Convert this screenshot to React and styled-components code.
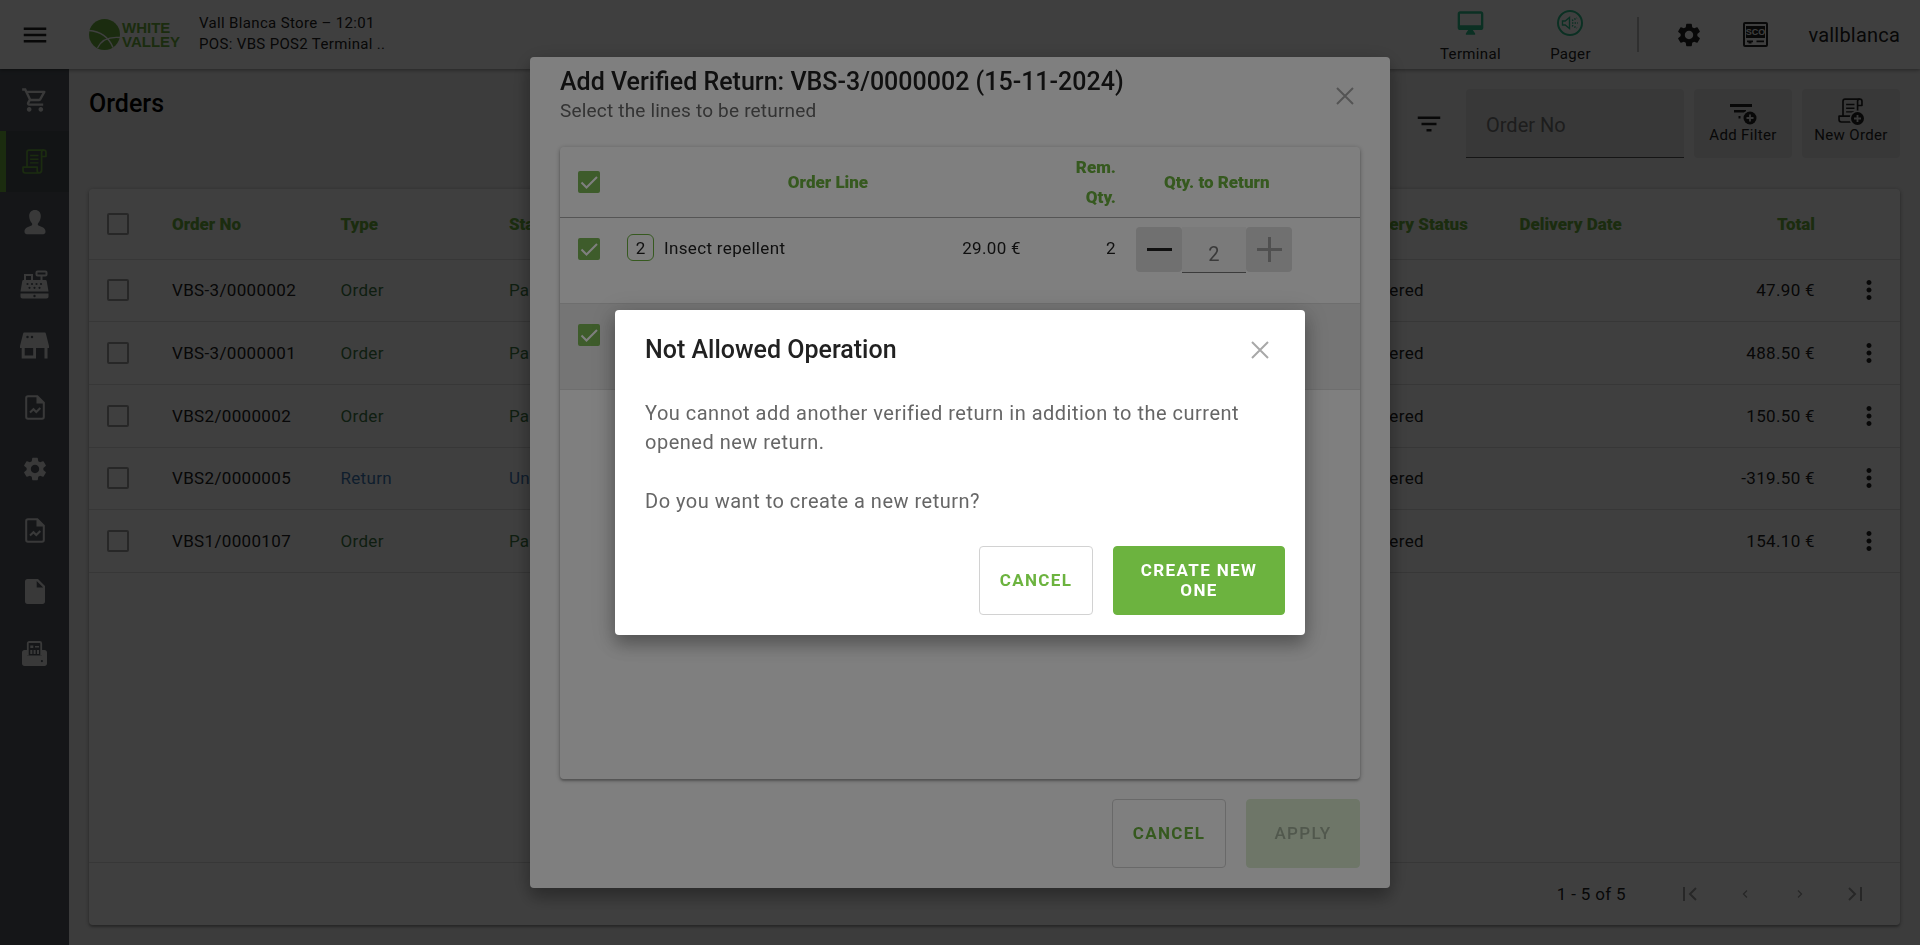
import { useState } from "react"
import styled, { createGlobalStyle, css } from "styled-components"
import { MdMenu, MdOutlineShoppingCart, MdSettings, MdMoreVert, MdFilterList, MdOutlineDesktopMac } from "react-icons/md"

const GREEN = "#6cb33f"
const TEAL = "#2cc08c"

const GlobalStyle = createGlobalStyle`
  * {
    box-sizing: border-box;
  }

  body {
    margin: 0;
    background-color: #f2f2f2;
    color: #212121;
    font-family: Roboto, "Liberation Sans", sans-serif;
    font-size: 17px;
    letter-spacing: 0.02em;
  }

  button,
  input {
    font: inherit;
    letter-spacing: inherit;
    color: inherit;
  }

  button {
    border: 0;
    padding: 0;
    background: none;
    cursor: pointer;
  }

  svg {
    display: block;
    flex: none;
  }
`

/* ---------- icons ---------- */

const ReceiptIcon = ({ size = 25 }) => (
  <svg width={size} height={size} viewBox="0 0 24 24" fill="none" stroke="currentColor" strokeWidth="1.6" strokeLinejoin="round">
    <path d="M4.8 17.3V3a2 2 0 0 1 2-2H21a2 2 0 0 1 2 2v4.2h-4.2" />
    <path d="M18.8 7.2V3.2c0-1.2.8-2.2 2-2.2M18.8 7v13.5c0 1.5-1 2.5-2.5 2.5H3.200C1.900 23 1 22 1 20.700V17.400h13.600v3.300c0 1.400.7 2.300 1.900 2.300" />
    <path d="M7.8 6.3h8M7.8 9.8h8M7.8 13.3h8" strokeWidth="1.4" />
  </svg>
)

const PersonIcon = () => (
  <svg width="22" height="25" viewBox="0 0 22 25" fill="currentColor">
    <path d="M11 0c3.600 0 5.800 2.600 5.800 6 0 2.700-1.100 5.600-2.700 7.200-.5.500-.5 1.900.3 2.300 3 1.300 7.100 2.200 7.100 6.200 0 2-1.500 2.600-3.500 2.600H4c-2 0-3.500-.6-3.500-2.600 0-4 4.100-4.900 7.100-6.200.8-.4.800-1.800.3-2.300C6.300 11.600 5.200 8.700 5.200 6 5.200 2.600 7.400 0 11 0z" />
  </svg>
)

const RegisterIcon = () => (
  <svg width="29" height="29" viewBox="0 0 29 29">
    <g fill="none" stroke="currentColor" strokeWidth="2">
      <rect x="16.5" y="1.5" width="10" height="4" rx="1" />
      <path d="M21.5 5.5v5M5 11V5h7v6" />
    </g>
    <path d="M3.5 10h22c.6 0 1 .4 1.200 1L28.500 21.500H.5L2.300 11c.2-.6.6-1 1.200-1z" fill="currentColor" />
    <path d="M.5 23.5h28v3c0 1-.8 2-2 2h-24c-1.200 0-2-1-2-2z" fill="currentColor" />
    <g fill="#545b63">
      <circle cx="7.5" cy="14" r="1.1" />
      <circle cx="12" cy="14" r="1.1" />
      <circle cx="16.5" cy="14" r="1.1" />
      <circle cx="21" cy="14" r="1.1" />
      <circle cx="9.5" cy="17.8" r="1.1" />
      <circle cx="14.5" cy="17.8" r="1.1" />
      <circle cx="19.5" cy="17.8" r="1.1" />
      <circle cx="14.5" cy="26" r="1.2" />
    </g>
  </svg>
)

const StoreIcon = () => (
  <svg width="29" height="27" viewBox="0 0 29 27" fill="currentColor">
    <path fillRule="evenodd" d="M4.500.5h20c.8 0 1.200.5 1.400 1.200L29 14v2h-1.500v10.500h-3V16H16v10.500H1.700V16H0v-2L3.100 1.700C3.300 1 3.700.5 4.500.5zM4.700 16v7.600h8.500V16zM7.500 3.700a1.200 1.200 0 1 0 0 2.500 1.200 1.200 0 0 0 0-2.500zm4.500 0a1.200 1.200 0 1 0 0 2.500 1.200 1.200 0 0 0 0-2.500z" />
  </svg>
)

const FileChartIcon = () => (
  <svg width="20" height="25" viewBox="0 0 20 25">
    <path d="M3 1.200h9.300l6.500 6.500V22c0 1-.8 1.800-1.800 1.800H3c-1 0-1.800-.8-1.800-1.800V3c0-1 .8-1.800 1.800-1.800z" fill="none" stroke="currentColor" strokeWidth="2" />
    <path d="M11.5 1l7.5 7.5h-7.5z" fill="currentColor" />
    <path d="M5 17.5l3.500-3.300 2.800 2.800 4-4" fill="none" stroke="currentColor" strokeWidth="2" />
  </svg>
)

const FileIcon = () => (
  <svg width="20" height="25" viewBox="0 0 20 25" fill="currentColor">
    <path fillRule="evenodd" d="M2.500 0H13l7 7v15.500c0 1.400-1 2.500-2.500 2.500h-15C1.100 25 0 23.900 0 22.500v-20C0 1.100 1.100 0 2.500 0zM11.700 2v6.500h6.500z" />
  </svg>
)

const PrinterIcon = () => (
  <svg width="25" height="25" viewBox="0 0 25 25">
    <path d="M5.800 14.500V2.500c0-.9.600-1.500 1.500-1.500h10.400c.9 0 1.500.6 1.500 1.500v12" fill="none" stroke="currentColor" strokeWidth="1.8" />
    <path d="M8.300 4.500h3v2.600h-3zM13 5h4v1.600h-4zM8.300 9h2v4h-2zM11.600 9h2v4h-2zM15 9h2v4h-2z" fill="currentColor" />
    <path fillRule="evenodd" d="M2.500 9H5v5.500h15V9h2.500c1.400 0 2.500 1.100 2.500 2.500v11c0 1.400-1.100 2.500-2.500 2.500h-20C1.100 25 0 23.900 0 22.500v-11C0 10.100 1.100 9 2.500 9zm17.400 10a1.100 1.100 0 1 0 0 2.200 1.100 1.100 0 0 0 0-2.200z" fill="currentColor" />
  </svg>
)

const PagerIcon = () => (
  <svg width="26" height="26" viewBox="0 0 26 26" fill="none" stroke="currentColor">
    <circle cx="13" cy="13" r="12" strokeWidth="2" />
    <path d="M5.500 11v4h2.700l4.300 3.500v-11L8.200 11z" strokeWidth="1.4" />
    <path d="M15 13h6M15 10.500l5-2.500M15 15.500l5 2.500" strokeWidth="1.6" strokeDasharray="1.4 1.2" />
  </svg>
)

const ScoLabel = styled.text`
  font: 700 9px "Liberation Sans", sans-serif;
  letter-spacing: 0;
  text-anchor: middle;
  fill: #fff;
`

const ScoIcon = () => (
  <svg width="25" height="25" viewBox="0 0 25 25">
    <rect x="1" y="1" width="23" height="23" rx="1" fill="none" stroke="currentColor" strokeWidth="2" />
    <path d="M3 4h19v12H3z" fill="currentColor" />
    <ScoLabel x="12.5" y="13">SCO</ScoLabel>
    <path d="M4 18.500h6v1.800H8.500V21.500h-3v-1.200H4zM13.500 18.500H21v1.800h-7.500z" fill="currentColor" />
  </svg>
)

const PlusBadge = ({ cx, cy }) => (
  <>
    <circle cx={cx} cy={cy} r="8" fill="#e2e2e2" />
    <circle cx={cx} cy={cy} r="6.5" fill="currentColor" />
    <path d={`M${cx - 3.5} ${cy}h7M${cx} ${cy - 3.5}v7`} stroke="#e2e2e2" strokeWidth="1.8" />
  </>
)

const AddFilterIcon = () => (
  <svg width="28" height="28" viewBox="0 0 28 28">
    <path d="M1 6h22v3H1zM5 12h12v2.600H5zM9.500 18h2v2.500h-2z" fill="currentColor" />
    <PlusBadge cx={21} cy={20} />
  </svg>
)

const NewOrderIcon = () => (
  <svg width="28" height="28" viewBox="0 0 28 28">
    <g transform="translate(1 0)"><ReceiptIcon /></g>
    <PlusBadge cx={20.5} cy={20.5} />
  </svg>
)

const CloseIcon = () => (
  <svg width="18" height="18" viewBox="0 0 18 18" stroke="currentColor" strokeWidth="2">
    <path d="M1 1l16 16M17 1L1 17" />
  </svg>
)

const StepIcon = ({ plus }) => (
  <svg width="25" height="25" viewBox="0 0 25 25" stroke="currentColor" strokeWidth="3">
    <path d={plus ? "M0 12.500h25M12.500 0v25" : "M0 12.500h25"} />
  </svg>
)

const PageIcon = ({ kind }) => {
  const paths = {
    first: "M2 0v14M14 1L8 7l6 6",
    prev: "M10 3.500L6.500 7l3.500 3.500",
    next: "M6 3.500L9.500 7 6 10.500",
    last: "M14 0v14M2 1l6 6-6 6",
  }
  return (
    <svg width="16" height="14" viewBox="0 0 16 14" fill="none" stroke="currentColor" strokeWidth={kind === "first" || kind === "last" ? 2 : 1.4}>
      <path d={paths[kind]} />
    </svg>
  )
}

const LogoMark = () => (
  <svg width="31" height="31" viewBox="0 0 31 31">
    <circle cx="15.5" cy="15.5" r="15.5" fill={GREEN} />
    <path d="M0 11.500c11 .5 20 7 24 17M8.500 29C12 21.500 20 17.500 31 18.500" fill="none" stroke="#fff" strokeWidth="1.4" />
  </svg>
)

/* ---------- app shell ---------- */

const Page = styled.div`
  display: flex;
  flex-direction: column;
  min-height: 100vh;
`

const TopBar = styled.header`
  display: flex;
  align-items: center;
  height: 69px;
  padding: 0 20px;
  background-color: #fff;
  box-shadow: 0 1px 4px rgba(0, 0, 0, 0.4);
  z-index: 1;
`

const MenuButton = styled.button`
  margin-right: 39px;
`

const Logo = styled.a`
  display: flex;
  align-items: center;
  gap: 2px;
  width: 110px;
  color: ${GREEN};
  text-decoration: none;
  font: 700 15px/14px "Liberation Sans", Arial, sans-serif;
  letter-spacing: 0;
`

const StoreInfo = styled.div`
  flex: 1;
  padding-bottom: 2px;
  font-size: 15px;
  line-height: 21px;
`

const Status = styled.button`
  display: flex;
  flex-direction: column;
  align-items: center;
  gap: 8px;
  width: 100px;
  padding-top: 2px;
  font-size: 15px;
  line-height: 18px;

  svg {
    height: 28px;
    color: ${TEAL};
  }
`

const Divider = styled.div`
  width: 2px;
  height: 35px;
  margin: 0 36px 0 17px;
  background-color: #bdbdbd;
`

const TopIcon = styled.button`
  margin-right: 40px;
`

const User = styled.span`
  font-size: 20px;
  letter-spacing: 0.01em;
`

const Body = styled.div`
  display: flex;
  flex: 1;
`

const SideBar = styled.nav`
  display: grid;
  grid-template-rows: repeat(10, 1fr);
  align-self: stretch;
  align-content: start;
  width: 69px;
  padding-bottom: 261px;
  background-color: #545b63;
`

const SideLink = styled.a`
  display: flex;
  align-items: center;
  justify-content: center;
  color: #e6e6e6;

  ${({ $active }) =>
    $active &&
    css`
      color: ${GREEN};
      background-color: #4b5056;
      border-left: 6px solid ${GREEN};
      padding-right: 6px;
    `}
`

const Main = styled.main`
  display: flex;
  flex: 1;
  flex-direction: column;
  padding: 20px;
`

const PageHead = styled.div`
  display: flex;
  align-items: flex-start;
  justify-content: space-between;
  margin-bottom: 31px;
`

const PageTitle = styled.h1`
  margin: 0;
  font-size: 25px;
  line-height: 30px;
  font-weight: 500;
  letter-spacing: 0;
  color: #000;
`

const Tools = styled.div`
  display: flex;
  align-items: center;
  gap: 10px;
`

const FilterButton = styled.button`
  margin-right: 12px;
`

const SearchInput = styled.input`
  width: 218px;
  height: 69px;
  padding: 4px 20px 0;
  border: 0;
  border-bottom: 1px solid #555;
  border-radius: 4px 4px 0 0;
  background-color: #e2e2e2;
  font-size: 20px;
  letter-spacing: 0;

  &::placeholder {
    color: #757575;
  }
`

const ToolButton = styled.button`
  display: flex;
  flex-direction: column;
  align-items: center;
  width: 98px;
  height: 69px;
  padding-top: 9px;
  border-radius: 4px;
  background-color: #e2e2e2;
  font-size: 15px;
  line-height: 18px;
`

const Card = styled.section`
  display: flex;
  flex: 1;
  flex-direction: column;
  min-height: 0;
  border-radius: 4px;
  background-color: #fff;
  box-shadow: 0 1px 5px rgba(0, 0, 0, 0.3), 0 2px 2px rgba(0, 0, 0, 0.2);
`

/* ---------- tables ---------- */

const Table = styled.table`
  width: 100%;
  height: ${({ $height }) => ($height ? `${$height}px` : "auto")};
  border-collapse: collapse;
  table-layout: fixed;
`

const Col = styled.col`
  width: ${({ $width }) => $width}px;
`

const Th = styled.th`
  height: ${({ $height }) => $height || 70}px;
  padding: 0 16px 0 ${({ $left }) => $left || 16}px;
  border-bottom: 1px solid ${({ $line }) => $line || "#dcdcdc"};
  color: ${GREEN};
  line-height: 30px;
  font-weight: 900;
  letter-spacing: 0;
  text-align: ${({ $align }) => $align || "left"};
`

const Td = styled.td`
  height: 62px;
  padding: 0 16px 0 ${({ $left }) => $left || 16}px;
  border-bottom: 1px solid #dcdcdc;
  color: ${({ $color }) => $color || "inherit"};
  text-align: ${({ $align }) => $align || "left"};
  white-space: nowrap;
`

const Check = styled.input`
  display: block;
  appearance: none;
  width: 22px;
  height: 22px;
  margin: 0 0 0 2px;
  border: 2px solid #9e9e9e;
  border-radius: 2px;

  &:checked {
    border-color: #7cb857;
    background: #7cb857
      url("data:image/svg+xml,%3Csvg xmlns='http://www.w3.org/2000/svg' viewBox='0 0 18 18' fill='none' stroke='%23fff' stroke-width='2'%3E%3Cpath d='M1.5 9.5l5 5L17 4'/%3E%3C/svg%3E")
      center / 18px no-repeat;
  }
`

const MoreButton = styled.button`
  display: block;
  margin-left: auto;
`

const Pager = styled.footer`
  display: flex;
  align-items: center;
  justify-content: flex-end;
  height: 63px;
  margin-top: auto;
  padding-right: 37px;
  border-top: 1px solid #dcdcdc;
`

const PagerCount = styled.span`
  margin-right: 56px;
`

const PagerButton = styled.button`
  width: 16px;
  margin-left: 39px;
  color: #9e9e9e;

  &:first-of-type {
    margin-left: 0;
  }
`

/* ---------- dialogs ---------- */

const Overlay = styled.div`
  position: fixed;
  inset: 0;
  display: flex;
  align-items: center;
  justify-content: center;
  background-color: rgba(0, 0, 0, 0.5);
  z-index: ${({ $level }) => $level * 10};
`

const Dialog = styled.div`
  display: flex;
  flex-direction: column;
  width: ${({ $width }) => $width}px;
  max-width: 95vw;
  height: ${({ $tall }) => ($tall ? "88vh" : "auto")};
  border-radius: 4px;
  background-color: #fff;
  box-shadow: 0 10px 16px rgba(0, 0, 0, 0.22), 0 4px 24px rgba(0, 0, 0, 0.2);
`

const ReturnDialog = styled(Dialog)`
  padding: 10px 30px 20px;
`

const DialogHead = styled.div`
  display: flex;
  align-items: center;
  justify-content: space-between;
  padding-right: 6px;
`

const DialogTitle = styled.h2`
  margin: 0;
  font-size: 25px;
  line-height: 30px;
  font-weight: 500;
  letter-spacing: 0;
`

const Subtitle = styled.p`
  margin: 0;
  color: #666;
  font-size: 19px;
  line-height: 28px;
  letter-spacing: 0.01em;
`

const CloseButton = styled.button`
  color: #a8a8a8;
`

const LinesCard = styled(Card)`
  margin: 22px 0 20px;
`

const LineRow = styled.tr`
  background-color: ${({ $shaded }) => ($shaded ? "#ebebeb" : "transparent")};
  vertical-align: top;
`

const LineCell = styled(Td)`
  height: 86px;
  padding-top: ${({ $top }) => $top || 20}px;
`

const LineName = styled.div`
  display: flex;
  align-items: center;
  gap: 10px;
`

const Badge = styled.span`
  display: flex;
  align-items: center;
  justify-content: center;
  width: 27px;
  height: 27px;
  border: 1px solid ${GREEN};
  border-radius: 6px;
  letter-spacing: 0;
`

const HeadInset = styled.div`
  padding-left: 28px;
`

const Stepper = styled.div`
  display: flex;
`

const StepButton = styled.button`
  display: flex;
  align-items: center;
  justify-content: center;
  width: 46px;
  height: 45px;
  border-radius: 4px;
  background-color: #e0e0e0;
  color: ${({ disabled }) => (disabled ? "#a0a0a0" : "#212121")};
`

const StepInput = styled.input`
  width: 64px;
  height: 46px;
  padding: 8px 0 0;
  border: 0;
  border-bottom: 1px solid #777;
  background-color: #f5f5f5;
  color: #757575;
  font-size: 20px;
  text-align: center;
`

const Actions = styled.div`
  display: flex;
  justify-content: flex-end;
  gap: 20px;
`

const Button = styled.button`
  width: ${({ $width }) => $width || 114}px;
  height: 69px;
  padding: 0 18px 2px;
  border: 1px solid #d2d2d2;
  border-radius: 4px;
  color: ${GREEN};
  font-weight: ${({ disabled }) => (disabled ? 500 : 700)};
  line-height: 20px;
  letter-spacing: 0.08em;
  white-space: ${({ $width }) => ($width ? "normal" : "nowrap")};
  text-transform: uppercase;

  ${({ $primary }) =>
    $primary &&
    css`
      border-color: ${GREEN};
      background-color: ${GREEN};
      color: #fff;
    `}

  &:disabled {
    border-color: #dcedd0;
    background-color: #dcedd0;
    color: #a3b09b;
  }
`

const AlertDialog = styled(Dialog)`
  padding: 20px 20px 20px 30px;
`

const AlertHead = styled(DialogHead)`
  height: 39px;
  padding-right: 16px;
`

const Message = styled.div`
  margin: 30px 0;
  color: #666;
  font-size: 20px;
  line-height: 29px;
  letter-spacing: 0.025em;

  p {
    margin: 0 0 30px;
  }

  p:last-child {
    margin: 0;
  }
`

/* ---------- data ---------- */

const menu = [
  { label: "Sales", icon: <MdOutlineShoppingCart size={28} /> },
  { label: "Orders", icon: <ReceiptIcon />, active: true },
  { label: "Customers", icon: <PersonIcon /> },
  { label: "Cash register", icon: <RegisterIcon /> },
  { label: "Store", icon: <StoreIcon /> },
  { label: "Reports", icon: <FileChartIcon /> },
  { label: "Settings", icon: <MdSettings size={28} /> },
  { label: "Statistics", icon: <FileChartIcon /> },
  { label: "Documents", icon: <FileIcon /> },
  { label: "Printer", icon: <PrinterIcon /> },
]

const orders = [
  { no: "VBS-3/0000002", type: "Order", status: "Paid", total: "47.90 €" },
  { no: "VBS-3/0000001", type: "Order", status: "Paid", total: "488.50 €" },
  { no: "VBS2/0000002", type: "Order", status: "Paid", total: "150.50 €" },
  { no: "VBS2/0000005", type: "Return", status: "Unpaid", total: "-319.50 €" },
  { no: "VBS1/0000107", type: "Order", status: "Paid", total: "154.10 €" },
]

const typeColors = { Order: "#3f7a45", Return: "#3f78b5" }

const OrdersTable = () => (
  <Table $height={384}>
    <colgroup>
      <Col $width={67} />
      <col span={9} />
      <Col $width={159} />
      <Col $width={69} />
    </colgroup>
    <thead>
      <tr>
        <Th><Check type="checkbox" aria-label="Select all orders" /></Th>
        <Th>Order No</Th>
        <Th>Type</Th>
        <Th>Status</Th>
        <Th />
        <Th />
        <Th />
        <Th />
        <Th>Delivery Status</Th>
        <Th>Delivery Date</Th>
        <Th $align="right">Total</Th>
        <Th />
      </tr>
    </thead>
    <tbody>
      {orders.map((order) => (
        <tr key={order.no}>
          <Td><Check type="checkbox" aria-label={`Select ${order.no}`} /></Td>
          <Td>{order.no}</Td>
          <Td $color={typeColors[order.type]}>{order.type}</Td>
          <Td $color={typeColors[order.type]}>{order.status}</Td>
          <Td />
          <Td />
          <Td />
          <Td />
          <Td>Delivered</Td>
          <Td />
          <Td $align="right">{order.total}</Td>
          <Td>
            <MoreButton aria-label="More"><MdMoreVert size={30} /></MoreButton>
          </Td>
        </tr>
      ))}
    </tbody>
  </Table>
)

const QtyStepper = ({ value, max, onChange }) => (
  <Stepper>
    <StepButton aria-label="Decrease" disabled={value === 0} onClick={() => onChange(value - 1)}>
      <StepIcon />
    </StepButton>
    <StepInput aria-label="Quantity to return" value={value} readOnly />
    <StepButton aria-label="Increase" disabled={value >= max} onClick={() => onChange(value + 1)}>
      <StepIcon plus />
    </StepButton>
  </Stepper>
)

const AddReturn = () => {
  const [qty, setQty] = useState(2)

  return (
    <Overlay $level={1}>
      <ReturnDialog role="dialog" aria-labelledby="return-title" $width={860} $tall>
        <DialogHead>
          <div>
            <DialogTitle id="return-title">Add Verified Return: VBS-3/0000002 (15-11-2024)</DialogTitle>
            <Subtitle>Select the lines to be returned</Subtitle>
          </div>
          <CloseButton aria-label="Close"><CloseIcon /></CloseButton>
        </DialogHead>
        <LinesCard>
          <Table>
            <colgroup>
              <Col $width={51} />
              <col />
              <Col $width={120} />
              <Col $width={95} />
              <Col $width={228} />
            </colgroup>
            <thead>
              <tr>
                <Th $height={71} $line="#aaa"><Check type="checkbox" aria-label="Select all lines" defaultChecked /></Th>
                <Th $line="#aaa" $align="center" $left={24} colSpan={2}>Order Line</Th>
                <Th $line="#aaa" $align="right">Rem. Qty.</Th>
                <Th $line="#aaa" $left={4}>
                  <HeadInset>Qty. to Return</HeadInset>
                </Th>
              </tr>
            </thead>
            <tbody>
              <LineRow>
                <LineCell><Check type="checkbox" aria-label="Select Insect repellent" defaultChecked /></LineCell>
                <LineCell $top={16}>
                  <LineName><Badge>2</Badge>Insect repellent</LineName>
                </LineCell>
                <LineCell $align="right">29.00 €</LineCell>
                <LineCell $align="right">2</LineCell>
                <LineCell $top={9} $left={4}>
                  <QtyStepper value={qty} max={2} onChange={setQty} />
                </LineCell>
              </LineRow>
              <LineRow $shaded>
                <LineCell><Check type="checkbox" aria-label="Select line" defaultChecked /></LineCell>
                <LineCell />
                <LineCell />
                <LineCell />
                <LineCell />
              </LineRow>
            </tbody>
          </Table>
        </LinesCard>
        <Actions>
          <Button>Cancel</Button>
          <Button disabled>Apply</Button>
        </Actions>
      </ReturnDialog>
    </Overlay>
  )
}

const NotAllowed = () => (
  <Overlay $level={2}>
    <AlertDialog role="alertdialog" aria-labelledby="alert-title" $width={690}>
      <AlertHead>
        <DialogTitle id="alert-title">Not Allowed Operation</DialogTitle>
        <CloseButton aria-label="Close"><CloseIcon /></CloseButton>
      </AlertHead>
      <Message>
        <p>You cannot add another verified return in addition to the current opened new return.</p>
        <p>Do you want to create a new return?</p>
      </Message>
      <Actions>
        <Button>Cancel</Button>
        <Button $primary $width={172}>Create new one</Button>
      </Actions>
    </AlertDialog>
  </Overlay>
)

const App = () => (
  <>
    <GlobalStyle />
    <Page>
      <TopBar>
        <MenuButton aria-label="Menu"><MdMenu size={30} /></MenuButton>
        <Logo href="#">
          <LogoMark />
          <span>WHITE<br />VALLEY</span>
        </Logo>
        <StoreInfo>
          Vall Blanca Store – 12:01
          <br />
          POS: VBS POS2 Terminal ..
        </StoreInfo>
        <Status><MdOutlineDesktopMac size={29} />Terminal</Status>
        <Status><PagerIcon />Pager</Status>
        <Divider />
        <TopIcon aria-label="Settings"><MdSettings size={28} /></TopIcon>
        <TopIcon aria-label="Self checkout"><ScoIcon /></TopIcon>
        <User>vallblanca</User>
      </TopBar>
      <Body>
        <SideBar>
          {menu.map(({ label, icon, active }) => (
            <SideLink key={label} href="#" aria-label={label} $active={active}>{icon}</SideLink>
          ))}
        </SideBar>
        <Main>
          <PageHead>
            <PageTitle>Orders</PageTitle>
            <Tools>
              <FilterButton aria-label="Filters"><MdFilterList size={30} /></FilterButton>
              <SearchInput aria-label="Order No" placeholder="Order No" />
              <ToolButton><AddFilterIcon />Add Filter</ToolButton>
              <ToolButton><NewOrderIcon />New Order</ToolButton>
            </Tools>
          </PageHead>
          <Card>
            <OrdersTable />
            <Pager>
              <PagerCount>1 - 5 of 5</PagerCount>
              <PagerButton aria-label="First page"><PageIcon kind="first" /></PagerButton>
              <PagerButton aria-label="Previous page"><PageIcon kind="prev" /></PagerButton>
              <PagerButton aria-label="Next page"><PageIcon kind="next" /></PagerButton>
              <PagerButton aria-label="Last page"><PageIcon kind="last" /></PagerButton>
            </Pager>
          </Card>
        </Main>
      </Body>
    </Page>
    <AddReturn />
    <NotAllowed />
  </>
)

export default App
